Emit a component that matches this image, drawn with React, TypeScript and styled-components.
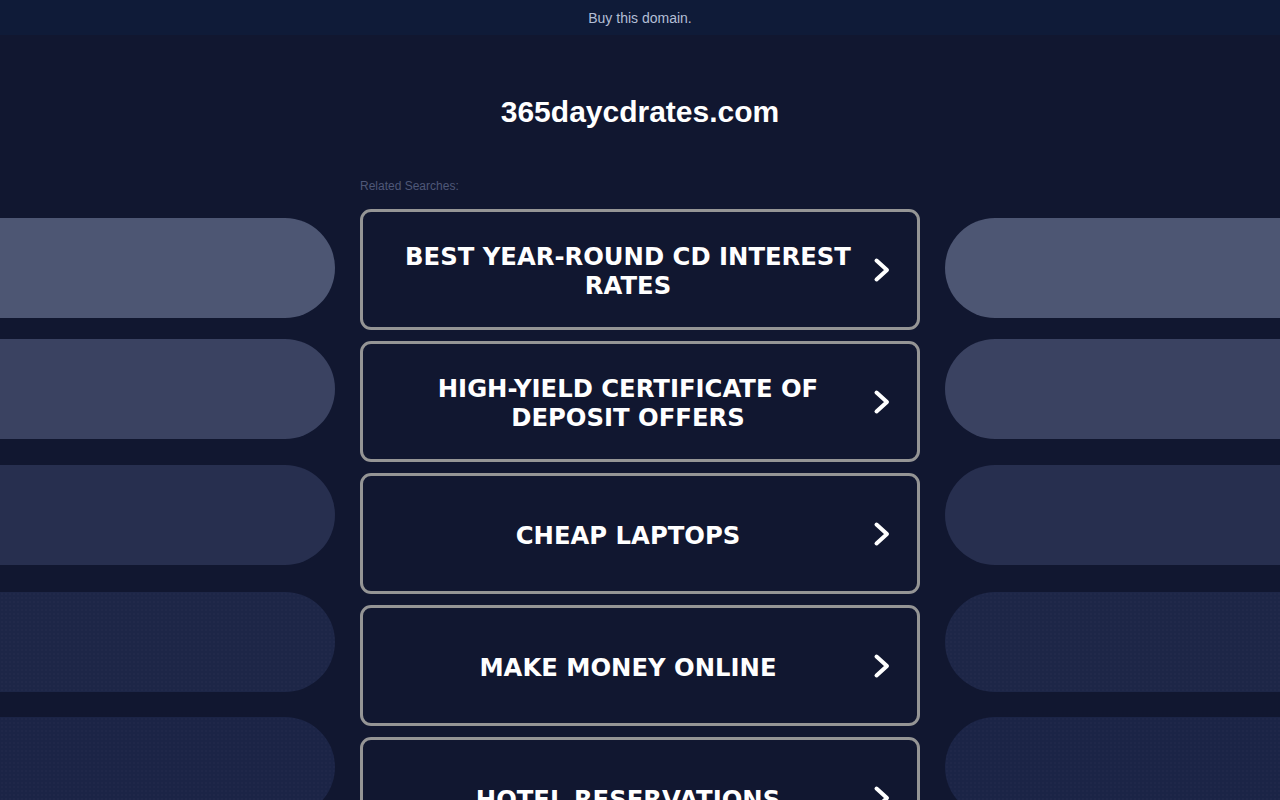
import React from "react";
import styled, { createGlobalStyle } from "styled-components";

const GlobalStyle = createGlobalStyle`
  html, body {
    margin: 0;
    padding: 0;
    background: #111730;
    overflow: hidden;
  }
  * { box-sizing: border-box; }
`;

const Page = styled.div`
  min-height: 800px;
  background: #111730;
  font-family: "Liberation Sans", Arial, sans-serif;
`;

const TopBar = styled.div`
  height: 35px;
  background: #0f1b38;
  display: flex;
  align-items: center;
  justify-content: center;
`;

const BuyLink = styled.a`
  color: #b3bfd6;
  font-size: 14px;
  text-decoration: none;
  margin-top: 1px;
`;

const Title = styled.h1`
  margin: 61px 0 0;
  text-align: center;
  color: #ffffff;
  font-size: 30px;
  line-height: 32px;
  font-weight: 700;
`;

const Grid = styled.div`
  margin-top: 51px;
  display: grid;
  grid-template-columns: 1fr 560px 1fr;
  column-gap: 25px;
`;

const SideColumn = styled.div`
  padding-top: 39px;
  display: flex;
  flex-direction: column;
  align-items: stretch;
`;

const Pill = styled.div<{ $side: "left" | "right"; $color: string; $offset: number; $dots?: boolean }>`
  height: 100px;
  margin-top: ${(p) => p.$offset}px;
  background-color: ${(p) => p.$color};
  ${(p) =>
    p.$dots
      ? `background-image: radial-gradient(rgba(255,255,255,0.035) 0.6px, transparent 0.8px);
         background-size: 4px 4px;`
      : ""}
  border-radius: ${(p) => (p.$side === "left" ? "0 50px 50px 0" : "50px 0 0 50px")};
`;

const Center = styled.div`
  display: flex;
  flex-direction: column;
`;

const Label = styled.div`
  color: #4f5878;
  font-size: 12px;
  line-height: 15px;
  margin-bottom: 15px;
`;

const CardList = styled.div`
  display: flex;
  flex-direction: column;
  gap: 11px;
`;

const Card = styled.a`
  height: 121px;
  border: 3px solid #959595;
  border-radius: 11px;
  background: #111730;
  display: flex;
  align-items: center;
  padding: 0 26px 0 20px;
  text-decoration: none;
  flex-shrink: 0;
`;

const CardText = styled.span`
  flex: 1;
  text-align: center;
  color: #ffffff;
  font-family: "DejaVu Sans", Verdana, sans-serif;
  font-weight: 700;
  font-size: 24.3px;
  line-height: 29px;
  padding-top: 3px;
  text-transform: uppercase;
`;

const Chevron = styled.svg`
  width: 18px;
  height: 26px;
  flex-shrink: 0;
`;

const pills = [
  { color: "#4d5673", offset: 0 },
  { color: "#3a4261", offset: 21 },
  { color: "#272f4f", offset: 26 },
  { color: "#1d2647", offset: 27, dots: true },
  { color: "#1b2446", offset: 25, dots: true },
];

const searches = [
  "Best Year-Round CD Interest Rates",
  "High-Yield Certificate of Deposit Offers",
  "Cheap Laptops",
  "Make Money Online",
  "Hotel Reservations",
];

const ArrowIcon = () => (
  <Chevron viewBox="0 0 18 26">
    <polyline
      points="3.5,3.5 14,13 3.5,22.5"
      fill="none"
      stroke="#ffffff"
      strokeWidth="4"
      strokeLinecap="round"
      strokeLinejoin="round"
    />
  </Chevron>
);

export default function App() {
  return (
    <Page>
      <GlobalStyle />
      <TopBar>
        <BuyLink href="#">Buy this domain.</BuyLink>
      </TopBar>
      <Title>365daycdrates.com</Title>
      <Grid>
        <SideColumn>
          {pills.map((p, i) => (
            <Pill key={i} $side="left" $color={p.color} $offset={p.offset} $dots={p.dots} />
          ))}
        </SideColumn>
        <Center>
          <Label>Related Searches:</Label>
          <CardList>
            {searches.map((s) => (
              <Card key={s} href="#">
                <CardText>{s}</CardText>
                <ArrowIcon />
              </Card>
            ))}
          </CardList>
        </Center>
        <SideColumn>
          {pills.map((p, i) => (
            <Pill key={i} $side="right" $color={p.color} $offset={p.offset} $dots={p.dots} />
          ))}
        </SideColumn>
      </Grid>
    </Page>
  );
}
